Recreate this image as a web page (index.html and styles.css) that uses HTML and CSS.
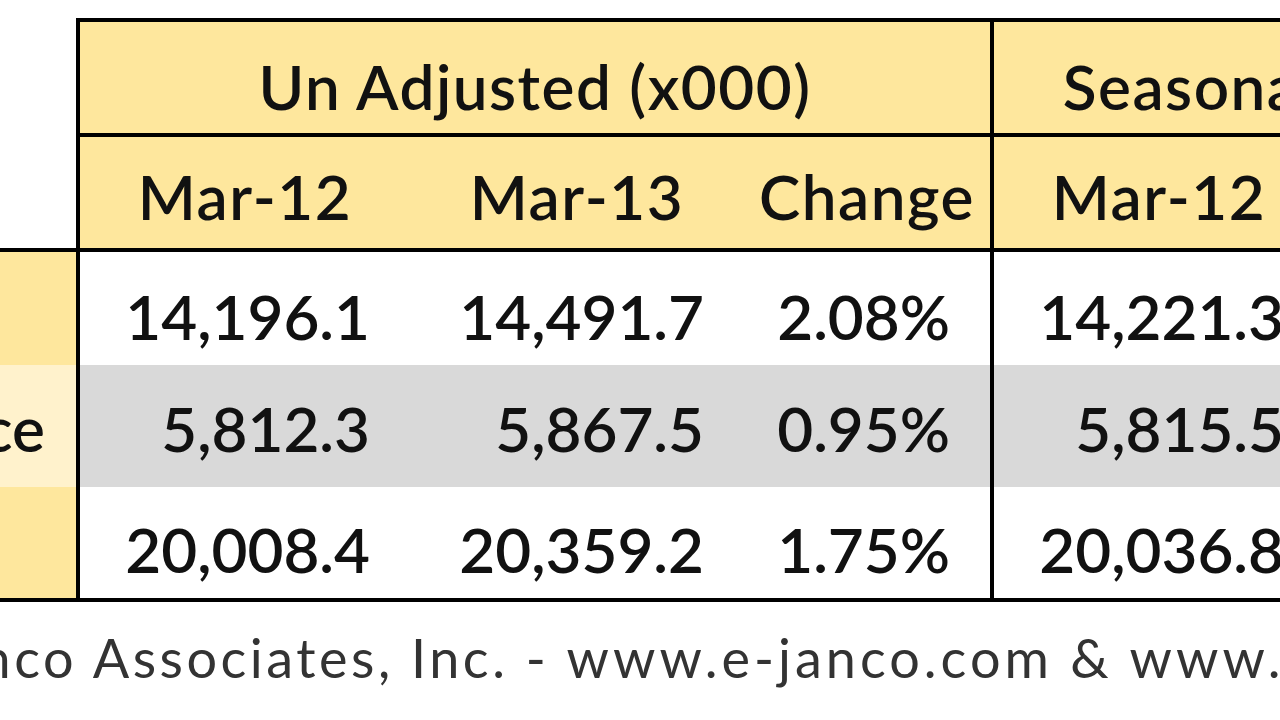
FILE: index.html
```html
<!DOCTYPE html>
<html lang="en">
<head>
    <meta charset="UTF-8">
    <meta name="viewport" content="width=device-width, initial-scale=1.0">
    <title>IT Job Market - Janco Associates</title>
    <link rel="stylesheet" href="styles.css">
</head>
<body>
    <div class="sheet">
        <table class="jobs">
            <colgroup>
                <col class="col-label">
                <col class="col-num">
                <col class="col-num">
                <col class="col-chg">
                <col class="col-num">
                <col class="col-num">
                <col class="col-chg">
            </colgroup>
            <thead>
                <tr class="group-row">
                    <th class="corner"></th>
                    <th colspan="3" class="group first">Un Adjusted (x000)</th>
                    <th colspan="3" class="group split">Seasonally Adjusted (x000)</th>
                </tr>
                <tr class="month-row">
                    <th class="corner"></th>
                    <th class="first">Mar-12</th>
                    <th>Mar-13</th>
                    <th>Change</th>
                    <th class="split">Mar-12</th>
                    <th>Mar-13</th>
                    <th>Change</th>
                </tr>
            </thead>
            <tbody>
                <tr class="row-a">
                    <td class="label">Retail Trade</td>
                    <td class="first">14,196.1</td>
                    <td>14,491.7</td>
                    <td>2.08%</td>
                    <td class="split">14,221.3</td>
                    <td>14,513.9</td>
                    <td>2.06%</td>
                </tr>
                <tr class="row-b">
                    <td class="label">Finance &amp; Insurance</td>
                    <td class="first">5,812.3</td>
                    <td>5,867.5</td>
                    <td>0.95%</td>
                    <td class="split">5,815.5</td>
                    <td>5,870.2</td>
                    <td>0.94%</td>
                </tr>
                <tr class="row-c">
                    <td class="label">Total</td>
                    <td class="first">20,008.4</td>
                    <td>20,359.2</td>
                    <td>1.75%</td>
                    <td class="split">20,036.8</td>
                    <td>20,384.1</td>
                    <td>1.74%</td>
                </tr>
            </tbody>
        </table>
    </div>

    <p class="source">Janco Associates, Inc. - <span class="url">www.e-janco.com</span> &amp; <span class="url">www.bls.gov</span></p>
</body>
</html>
```

FILE: styles.css
```css
:root {
    --gold: #fee79d;
    --gold-light: #fff2cc;
    --band: #d9d9d9;
    --rule: #000;
    --ink: #111;
}

body {
    margin: 0;
    background: #fff;
    font-family: 'Lato', 'Open Sans', sans-serif;
    color: var(--ink);
    overflow: hidden;
}

/* the sheet is wider than the window: the number columns are pinned
   76px from the left and the label column runs off the left edge */
.sheet {
    display: flex;
    justify-content: flex-end;
    width: 1904px;
    margin-top: 18px;
}

.jobs {
    flex-shrink: 0;
    border-collapse: separate;
    border-spacing: 0;
    font-size: 62px;
    font-weight: 600;
    line-height: 1.2;
}

.col-num { width: 334px; }
.col-chg { width: 246px; }

.jobs th,
.jobs td {
    padding: 0 40px 0 0;
    vertical-align: bottom;
    white-space: nowrap;
    overflow: hidden;
    font-weight: inherit;
}

.jobs th {
    background: var(--gold);
    text-align: center;
    letter-spacing: 1.5px;
    padding-right: 0;
}

.jobs td {
    text-align: right;
}

.jobs .first,
.jobs .split {
    border-left: 4px solid var(--rule);
}

/* header rows */
.group-row { height: 119px; }
.group-row th {
    border-top: 4px solid var(--rule);
    border-bottom: 4px solid var(--rule);
    padding-bottom: 10px;
}

.month-row { height: 115px; }
.month-row th {
    border-bottom: 4px solid var(--rule);
    padding-bottom: 15px;
}

.jobs th.corner {
    background: #fff;
    border-top: 0;
}

.group-row th.corner {
    border-bottom: 0;
}

/* data rows */
.row-a { height: 113px; }
.row-a td { padding-bottom: 12px; background: #fff; }

.row-b { height: 122px; }
.row-b td { padding-bottom: 22px; background: var(--band); }

.row-c { height: 115px; }
.row-c td {
    padding-bottom: 12px;
    background: #fff;
    border-bottom: 4px solid var(--rule);
}

.jobs td.label {
    text-align: left;
    padding: 0 31px 0 8px;
    background: var(--gold);
}

.row-a td.label { padding-bottom: 12px; }
.row-b td.label { padding-bottom: 22px; background: var(--gold-light); }
.row-c td.label { padding-bottom: 12px; }

.source {
    margin: 24px 0 0 -75px;
    font-size: 54px;
    line-height: 1.2;
    letter-spacing: 3.5px;
    color: #333;
    white-space: nowrap;
}

.source .url {
    letter-spacing: 4px;
}
```
